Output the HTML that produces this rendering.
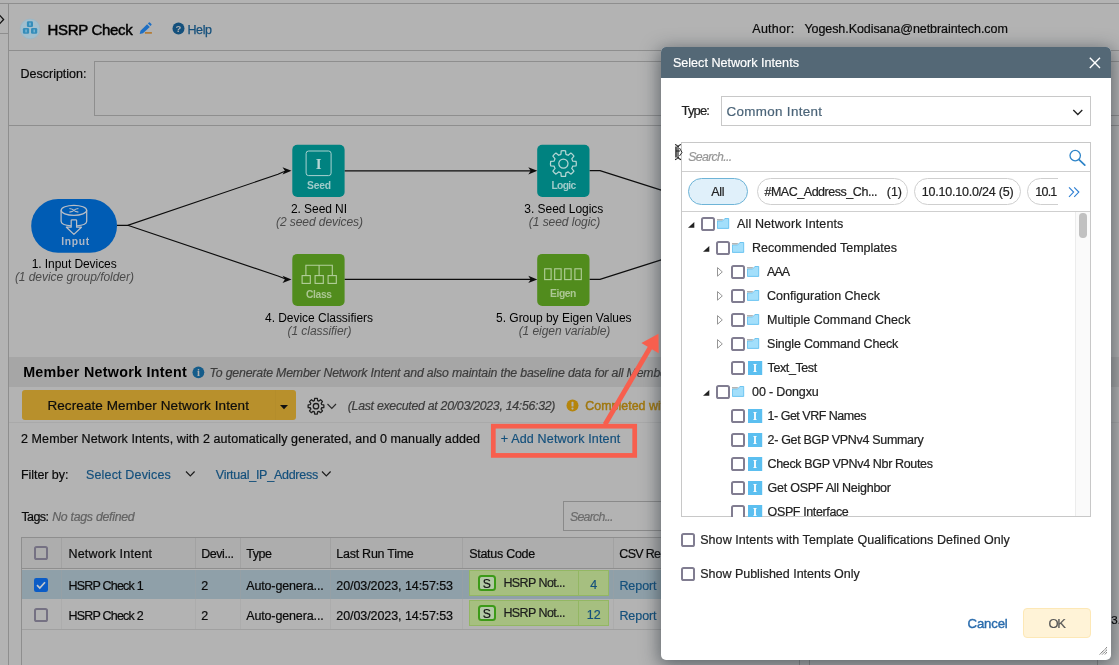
<!DOCTYPE html>
<html lang="en"><head><meta charset="utf-8"><title>HSRP Check - Select Network Intents</title>
<style>
html,body{margin:0;padding:0}
body{width:1119px;height:665px;overflow:hidden;background:#b3b3b3;font-family:"Liberation Sans",sans-serif}
#page{position:relative;width:1119px;height:665px;overflow:hidden;background:#b3b3b3;filter:opacity(0.9999)}
.r{position:absolute;display:block;box-sizing:content-box}
.t{position:absolute;white-space:nowrap;line-height:24px;display:block}
</style></head><body><div id="page">
<div class="r" style="left:0px;top:3px;width:1119px;height:1px;background:#8e8e8e;"></div>
<div class="r" style="left:8px;top:4px;width:1px;height:661px;background:#8e8e8e;"></div>
<div class="r" style="left:0px;top:33px;width:8px;height:1px;background:#8e8e8e;"></div>
<svg class="r" style="left:0;top:10px" width="8" height="20" viewBox="0 0 8 20"><path d="M-1 4.5 L3.6 9.5 L-1 14.5" fill="none" stroke="#111" stroke-width="1.3"/></svg>
<div class="r" style="left:9px;top:50px;width:1110px;height:1px;background:#8e8e8e;"></div>
<div class="r" style="left:94px;top:61px;width:1040px;height:53px;border:1px solid #8e8e8e;"></div>
<div class="r" style="left:9px;top:125px;width:1110px;height:1px;background:#8e8e8e;"></div>
<svg class="r" style="left:19px;top:18px" width="22" height="22" viewBox="0 0 22 22">
<circle cx="11.1" cy="10.9" r="9.9" fill="#a1bfce" stroke="#96b7c9" stroke-width="0.6"/>
<g fill="#348dba"><rect x="7.9" y="3.2" width="6.1" height="5.9" rx="1.3"/><rect x="3.9" y="10" width="6.2" height="5.8" rx="1.3"/><rect x="12" y="10" width="6.2" height="5.8" rx="1.3"/></g>
<g fill="#8fc3dd"><rect x="10.4" y="4.7" width="1.2" height="2.9"/><rect x="6.5" y="11.5" width="1.1" height="2.9"/><rect x="14.6" y="11.5" width="1.1" height="2.9"/></g>
</svg>
<span class="t" style="left:47.50px;top:18.00px;font-size:15px;color:#000;letter-spacing:-0.321px;-webkit-text-stroke:0.45px #000;">HSRP Check</span>
<svg class="r" style="left:138px;top:20px" width="16" height="16" viewBox="0 0 16 16">
<path d="M1.7 13.9 L2.5 10.8 L9.1 4.2 L11.8 6.9 L5 13.2 Z" fill="#1d6fc4"/><path d="M9.9 3.4 L10.9 2.5 Q11.4 2.1 11.9 2.6 L13.4 4.1 Q13.9 4.6 13.4 5.1 L12.5 6 Z" fill="#1d6fc4"/><path d="M6.9 12.9 H13.9" stroke="#b4772a" stroke-width="1.6"/></svg>
<svg class="r" style="left:171.5px;top:22.3px" width="13" height="13" viewBox="0 0 13 13"><circle cx="6.5" cy="6.5" r="6" fill="#14507c"/>
<text x="6.5" y="10" font-family="Liberation Sans, sans-serif" font-size="9.5" font-weight="bold" fill="#b3b3b3" text-anchor="middle">?</text></svg>
<span class="t" style="left:187.50px;top:18.00px;font-size:12.5px;color:#14507c;letter-spacing:-0.403px;-webkit-text-stroke:0.25px #14507c;">Help</span>
<span class="t" style="left:20.50px;top:62.00px;font-size:12.5px;color:#0a0a0a;-webkit-text-stroke:0.2px #0a0a0a;">Description:</span>
<span class="t" style="left:752.30px;top:17.00px;font-size:12.5px;color:#0a0a0a;letter-spacing:0.250px;-webkit-text-stroke:0.2px #0a0a0a;">Author:</span>
<span class="t" style="left:804.40px;top:17.00px;font-size:12.5px;color:#0a0a0a;letter-spacing:-0.065px;-webkit-text-stroke:0.2px #0a0a0a;">Yogesh.Kodisana@netbraintech.com</span>
<svg class="r" style="left:0;top:125px" width="670" height="230" viewBox="0 125 670 230">
<defs><path id="ah" d="M0 0 L-9 -3.6 L-6.6 0 L-9 3.6 Z" fill="#0c0c0c"/></defs>
<g fill="none" stroke="#0c0c0c" stroke-width="1.15">
<path d="M117 225.3 H127.7 L278 174.3 Q283 172 286 171"/>
<path d="M127.7 225.3 L278 276 Q283 278 286 279.3"/>
<path d="M344.5 170.8 H532"/><path d="M344.5 279.4 H532"/>
<path d="M589.5 170.6 H600 L662 190.4"/><path d="M589.5 279.4 H600 L662 259.6"/>
</g>
<use href="#ah" x="291.5" y="170.8"/><use href="#ah" x="291.5" y="279.4"/><use href="#ah" x="537.3" y="170.8"/><use href="#ah" x="537.3" y="279.4"/>
<rect x="31.2" y="199" width="85.8" height="53.8" rx="26.9" fill="#005cb4"/>
<g fill="none" stroke="#b9bec6" stroke-width="1.25" stroke-linejoin="round">
<ellipse cx="73.9" cy="210.3" rx="12.8" ry="5"/>
<path d="M61.1 210.3 V221.2 C61.1 223.6 65.6 225.4 71.2 225.8 M76.6 225.8 C82.2 225.4 86.7 223.6 86.7 221.2 V210.3"/>
<path d="M71.2 227.2 V220.6 Q71.2 219.8 72 219.8 H75.8 Q76.6 219.8 76.6 220.6 V227.2 H81.4 L73.9 234.4 L66.4 227.2 Z"/>
<path d="M69.4 208.5 Q72.5 208.9 73.9 210.3 Q75.3 211.7 78.4 212.1 M69.4 212.1 Q72.5 211.7 73.9 210.3 Q75.3 208.9 78.4 208.5" stroke-width="1.1"/>
</g>
<rect x="292.3" y="144.8" width="52.3" height="52.2" rx="5" fill="#008280"/>
<rect x="537.2" y="144.8" width="52.3" height="52.2" rx="5" fill="#008280"/>
<rect x="292.3" y="253.9" width="52.3" height="52.1" rx="5" fill="#518c1d"/>
<rect x="537.2" y="253.9" width="52.3" height="52.1" rx="5" fill="#518c1d"/>
<rect x="306.1" y="151" width="25" height="24.6" rx="2.5" fill="none" stroke="#a9d2d0" stroke-width="1"/>
<text x="318.6" y="168.6" font-family="Liberation Serif, serif" font-weight="bold" font-size="15" fill="#b4d6d4" text-anchor="middle">I</text>
<g fill="none" stroke="#b4cf9c" stroke-width="1.1">
<path d="M305.9 275.4 V265.2 H332.3 V275.4 M319.1 265.2 V275.4"/>
<rect x="302.1" y="275.6" width="8.2" height="7.8"/><rect x="315.1" y="275.6" width="8.2" height="7.8"/><rect x="328.1" y="275.6" width="8.2" height="7.8"/>
<rect x="544.7" y="268.8" width="6.4" height="10.8"/><rect x="554.7" y="268.8" width="6.4" height="10.8"/><rect x="564.7" y="268.8" width="6.4" height="10.8"/><rect x="574.9" y="268.8" width="6.4" height="10.8"/>
</g>
<g transform="translate(563.4 163.6)" fill="none" stroke="#b4d6d4" stroke-width="1.25" stroke-linejoin="round"><circle r="4.6"/>
<path id="gear" d="M-2.47 -9.28 L-2.18 -12.71 A12.9 12.9 0 0 1 2.18 -12.71 L2.47 -9.28 A9.6 9.6 0 0 1 4.81 -8.31 L7.45 -10.53 A12.9 12.9 0 0 1 10.53 -7.45 L8.31 -4.81 A9.6 9.6 0 0 1 9.28 -2.47 L12.71 -2.18 A12.9 12.9 0 0 1 12.71 2.18 L9.28 2.47 A9.6 9.6 0 0 1 8.31 4.81 L10.53 7.45 A12.9 12.9 0 0 1 7.45 10.53 L4.81 8.31 A9.6 9.6 0 0 1 2.47 9.28 L2.18 12.71 A12.9 12.9 0 0 1 -2.18 12.71 L-2.47 9.28 A9.6 9.6 0 0 1 -4.81 8.31 L-7.45 10.53 A12.9 12.9 0 0 1 -10.53 7.45 L-8.31 4.81 A9.6 9.6 0 0 1 -9.28 2.47 L-12.71 2.18 A12.9 12.9 0 0 1 -12.71 -2.18 L-9.28 -2.47 A9.6 9.6 0 0 1 -8.31 -4.81 L-10.53 -7.45 A12.9 12.9 0 0 1 -7.45 -10.53 L-4.81 -8.31 A9.6 9.6 0 0 1 -2.47 -9.28 Z"/></g>
</svg>
<span class="t" style="left:61.30px;top:230.00px;font-size:10.3px;color:#adb7c6;letter-spacing:0.708px;font-weight:bold;">Input</span>
<span class="t" style="left:307.00px;top:174.00px;font-size:10.3px;color:#9fcbc9;letter-spacing:-0.206px;font-weight:bold;">Seed</span>
<span class="t" style="left:551.40px;top:174.00px;font-size:10.3px;color:#9fcbc9;letter-spacing:-0.666px;font-weight:bold;">Logic</span>
<span class="t" style="left:306.00px;top:283.00px;font-size:10.3px;color:#abc793;letter-spacing:-0.371px;font-weight:bold;">Class</span>
<span class="t" style="left:550.00px;top:282.00px;font-size:10.3px;color:#abc793;letter-spacing:-0.411px;font-weight:bold;">Eigen</span>
<span class="t" style="left:31.70px;top:252.00px;font-size:12px;color:#000;letter-spacing:-0.070px;">1. Input Devices</span>
<span class="t" style="left:14.90px;top:265.00px;font-size:12px;color:#4a4a4a;letter-spacing:-0.049px;font-style:italic;">(1 device group/folder)</span>
<span class="t" style="left:291.00px;top:197.00px;font-size:12px;color:#000;letter-spacing:-0.078px;">2. Seed NI</span>
<span class="t" style="left:276.00px;top:210.00px;font-size:12px;color:#4a4a4a;letter-spacing:-0.070px;font-style:italic;">(2 seed devices)</span>
<span class="t" style="left:524.30px;top:197.00px;font-size:12px;color:#000;letter-spacing:-0.030px;">3. Seed Logics</span>
<span class="t" style="left:528.80px;top:210.00px;font-size:12px;color:#4a4a4a;letter-spacing:-0.049px;font-style:italic;">(1 seed logic)</span>
<span class="t" style="left:265.00px;top:306.00px;font-size:12px;color:#000;letter-spacing:-0.035px;">4. Device Classifiers</span>
<span class="t" style="left:287.50px;top:319.00px;font-size:12px;color:#4a4a4a;letter-spacing:-0.052px;font-style:italic;">(1 classifier)</span>
<span class="t" style="left:496.00px;top:306.00px;font-size:12px;color:#000;letter-spacing:-0.011px;">5. Group by Eigen Values</span>
<span class="t" style="left:518.65px;top:319.00px;font-size:12px;color:#4a4a4a;letter-spacing:-0.060px;font-style:italic;">(1 eigen variable)</span>
<div class="r" style="left:9px;top:357px;width:1110px;height:30px;background:#a6a6a6;"></div>
<span class="t" style="left:23.20px;top:360.00px;font-size:14.3px;color:#000;letter-spacing:0.274px;font-weight:bold;">Member Network Intent</span>
<svg class="r" style="left:191.5px;top:365.5px" width="13" height="13" viewBox="0 0 13 13"><circle cx="6.4" cy="6.3" r="5.9" fill="#145c8a"/>
<text x="6.5" y="10.4" font-family="Liberation Serif, serif" font-size="10.5" font-weight="bold" fill="#b0b0b0" text-anchor="middle">i</text></svg>
<span class="t" style="left:209.50px;top:361.00px;font-size:12.3px;color:#3c3c3c;letter-spacing:-0.168px;font-style:italic;-webkit-text-stroke:0.2px #3c3c3c;white-space:nowrap;">To generate Member Network Intent and also maintain the baseline data for all Member Network Intents</span>
<div class="r" style="left:21.8px;top:390.2px;width:274px;height:29.5px;background:#b8902c;border-radius:3px;"></div>
<div class="r" style="left:275px;top:390.2px;width:1px;height:29.5px;background:#b48d2b;"></div>
<span class="t" style="left:47.40px;top:394.00px;font-size:13.5px;color:#0c0c0c;letter-spacing:0.095px;-webkit-text-stroke:0.2px #0c0c0c;">Recreate Member Network Intent</span>
<svg class="r" style="left:279px;top:404px" width="10" height="6" viewBox="0 0 10 6"><path d="M1 1 H9 L5 5.2 Z" fill="#111"/></svg>
<svg class="r" style="left:305px;top:395px" width="34" height="22" viewBox="0 0 34 22"><g transform="translate(11 11.2)" fill="none" stroke="#1e1e1e" stroke-width="1.3" stroke-linejoin="round"><circle r="2.7"/><path d="M-1.57 -5.69 L-1.34 -7.79 A7.9 7.9 0 0 1 1.34 -7.79 L1.57 -5.69 A5.9 5.9 0 0 1 2.91 -5.13 L4.56 -6.45 A7.9 7.9 0 0 1 6.45 -4.56 L5.13 -2.91 A5.9 5.9 0 0 1 5.69 -1.57 L7.79 -1.34 A7.9 7.9 0 0 1 7.79 1.34 L5.69 1.57 A5.9 5.9 0 0 1 5.13 2.91 L6.45 4.56 A7.9 7.9 0 0 1 4.56 6.45 L2.91 5.13 A5.9 5.9 0 0 1 1.57 5.69 L1.34 7.79 A7.9 7.9 0 0 1 -1.34 7.79 L-1.57 5.69 A5.9 5.9 0 0 1 -2.91 5.13 L-4.56 6.45 A7.9 7.9 0 0 1 -6.45 4.56 L-5.13 2.91 A5.9 5.9 0 0 1 -5.69 1.57 L-7.79 1.34 A7.9 7.9 0 0 1 -7.79 -1.34 L-5.69 -1.57 A5.9 5.9 0 0 1 -5.13 -2.91 L-6.45 -4.56 A7.9 7.9 0 0 1 -4.56 -6.45 L-2.91 -5.13 A5.9 5.9 0 0 1 -1.57 -5.69 Z"/></g>
<path d="M22.5 9 L26.8 13.3 L31 9" fill="none" stroke="#2c2c2c" stroke-width="1.2"/></svg>
<span class="t" style="left:347.80px;top:394.00px;font-size:12.3px;color:#3c3c3c;letter-spacing:-0.275px;font-style:italic;-webkit-text-stroke:0.2px #3c3c3c;">(Last executed at 20/03/2023, 14:56:32)</span>
<svg class="r" style="left:566px;top:398.5px" width="13" height="13" viewBox="0 0 13 13"><circle cx="6.5" cy="6.5" r="6" fill="#b5850c"/>
<rect x="5.5" y="2.8" width="2" height="4.8" rx="0.6" fill="#b3b3b3"/><circle cx="6.5" cy="9.6" r="1.1" fill="#b3b3b3"/></svg>
<span class="t" style="left:585.30px;top:394.00px;font-size:12.4px;color:#a0770f;letter-spacing:0.030px;-webkit-text-stroke:0.45px #a0770f;">Completed with warnings</span>
<div class="r" style="left:9px;top:422px;width:1110px;height:1px;background:#a9a9a9;"></div>
<span class="t" style="left:21.00px;top:427.00px;font-size:12.5px;color:#0a0a0a;letter-spacing:0.086px;-webkit-text-stroke:0.2px #0a0a0a;">2 Member Network Intents, with 2 automatically generated, and 0 manually added</span>
<span class="t" style="left:500.80px;top:427.00px;font-size:12.5px;color:#14507c;letter-spacing:0.164px;-webkit-text-stroke:0.2px #14507c;">+ Add Network Intent</span>
<span class="t" style="left:21.00px;top:463.00px;font-size:12.5px;color:#0a0a0a;letter-spacing:-0.058px;-webkit-text-stroke:0.2px #0a0a0a;">Filter by:</span>
<span class="t" style="left:86.00px;top:463.00px;font-size:12.5px;color:#14507c;letter-spacing:0.164px;-webkit-text-stroke:0.2px #14507c;">Select Devices</span>
<svg class="r" style="left:185px;top:470px" width="11" height="8" viewBox="0 0 11 8"><path d="M1 1.5 L5.3 5.8 L9.6 1.5" fill="none" stroke="#1c1c1c" stroke-width="1.2"/></svg>
<span class="t" style="left:215.80px;top:463.00px;font-size:12.5px;color:#14507c;letter-spacing:-0.258px;-webkit-text-stroke:0.2px #14507c;">Virtual_IP_Address</span>
<svg class="r" style="left:321px;top:470px" width="11" height="8" viewBox="0 0 11 8"><path d="M1 1.5 L5.3 5.8 L9.6 1.5" fill="none" stroke="#1c1c1c" stroke-width="1.2"/></svg>
<span class="t" style="left:21.40px;top:505.00px;font-size:12.5px;color:#0a0a0a;letter-spacing:-0.569px;-webkit-text-stroke:0.2px #0a0a0a;">Tags:</span>
<span class="t" style="left:52.20px;top:505.00px;font-size:12.3px;color:#626262;letter-spacing:-0.262px;font-style:italic;-webkit-text-stroke:0.2px #626262;">No tags defined</span>
<div class="r" style="left:563px;top:501px;width:200px;height:28px;border:1px solid #8a8a8a;"></div>
<span class="t" style="left:570.00px;top:505.00px;font-size:12.3px;color:#6c6c6c;letter-spacing:-0.716px;font-style:italic;-webkit-text-stroke:0.2px #6c6c6c;">Search...</span>
<div class="r" style="left:21px;top:537px;width:1075px;height:140px;border:1px solid #8e8e8e;"></div>
<div class="r" style="left:22px;top:538px;width:1075px;height:30px;background:#adadad;"></div>
<div class="r" style="left:22px;top:568px;width:1075px;height:1px;background:#8e8e8e;"></div>
<div class="r" style="left:22px;top:570px;width:1075px;height:29px;background:#8fa0a9;"></div>
<div class="r" style="left:22px;top:629px;width:1075px;height:1px;background:#a0a0a0;"></div>
<div class="r" style="left:61.4px;top:538px;width:1px;height:30px;background:#a2a2a2;"></div>
<div class="r" style="left:61.4px;top:570px;width:1px;height:59px;background:rgba(160,160,160,0.35);"></div>
<div class="r" style="left:194.5px;top:538px;width:1px;height:30px;background:#a2a2a2;"></div>
<div class="r" style="left:194.5px;top:570px;width:1px;height:59px;background:rgba(160,160,160,0.35);"></div>
<div class="r" style="left:239.5px;top:538px;width:1px;height:30px;background:#a2a2a2;"></div>
<div class="r" style="left:239.5px;top:570px;width:1px;height:59px;background:rgba(160,160,160,0.35);"></div>
<div class="r" style="left:329.6px;top:538px;width:1px;height:30px;background:#a2a2a2;"></div>
<div class="r" style="left:329.6px;top:570px;width:1px;height:59px;background:rgba(160,160,160,0.35);"></div>
<div class="r" style="left:462.3px;top:538px;width:1px;height:30px;background:#a2a2a2;"></div>
<div class="r" style="left:462.3px;top:570px;width:1px;height:59px;background:rgba(160,160,160,0.35);"></div>
<div class="r" style="left:612.5px;top:538px;width:1px;height:30px;background:#a2a2a2;"></div>
<div class="r" style="left:612.5px;top:570px;width:1px;height:59px;background:rgba(160,160,160,0.35);"></div>
<div class="r" style="left:34.1px;top:546px;width:13.8px;height:13.6px;background:transparent;border:2px solid #757183;border-radius:2.6px;box-sizing:border-box;"></div>
<svg class="r" style="left:34.2px;top:578px" width="14" height="14" viewBox="0 0 14 14"><rect x="0" y="0" width="14" height="14" rx="2.2" fill="#0b5cc6"/><path d="M3 7.2 L5.8 10 L11 4.2" fill="none" stroke="#c4c8cc" stroke-width="1.7"/></svg>
<div class="r" style="left:34.1px;top:608px;width:13.8px;height:13.6px;background:transparent;border:2px solid #757183;border-radius:2.6px;box-sizing:border-box;"></div>
<span class="t" style="left:68.40px;top:542.00px;font-size:12.5px;color:#0a0a0a;letter-spacing:0.239px;-webkit-text-stroke:0.2px #0a0a0a;">Network Intent</span>
<span class="t" style="left:201.20px;top:542.00px;font-size:12.5px;color:#0a0a0a;letter-spacing:-0.437px;-webkit-text-stroke:0.2px #0a0a0a;">Devi...</span>
<span class="t" style="left:246.20px;top:542.00px;font-size:12.5px;color:#0a0a0a;letter-spacing:-0.434px;-webkit-text-stroke:0.2px #0a0a0a;">Type</span>
<span class="t" style="left:336.30px;top:542.00px;font-size:12.5px;color:#0a0a0a;letter-spacing:-0.258px;-webkit-text-stroke:0.2px #0a0a0a;">Last Run Time</span>
<span class="t" style="left:469.20px;top:542.00px;font-size:12.5px;color:#0a0a0a;letter-spacing:-0.279px;-webkit-text-stroke:0.2px #0a0a0a;">Status Code</span>
<span class="t" style="left:619.30px;top:542.00px;font-size:12.5px;color:#0a0a0a;letter-spacing:-0.688px;-webkit-text-stroke:0.2px #0a0a0a;">CSV Report</span>
<span class="t" style="left:68.40px;top:574.00px;font-size:12.5px;color:#0a0a0a;letter-spacing:-0.776px;-webkit-text-stroke:0.2px #0a0a0a;">HSRP Check 1</span>
<span class="t" style="left:201.20px;top:574.00px;font-size:12.5px;color:#0a0a0a;-webkit-text-stroke:0.2px #0a0a0a;">2</span>
<span class="t" style="left:246.20px;top:574.00px;font-size:12.5px;color:#0a0a0a;letter-spacing:-0.132px;-webkit-text-stroke:0.2px #0a0a0a;">Auto-genera...</span>
<span class="t" style="left:336.30px;top:574.00px;font-size:12.5px;color:#0a0a0a;letter-spacing:-0.077px;-webkit-text-stroke:0.2px #0a0a0a;">20/03/2023, 14:57:53</span>
<div class="r" style="left:468.9px;top:570.4px;width:140px;height:25.2px;background:#a6bf80;border:1px solid #93b763;box-sizing:border-box;"></div>
<div class="r" style="left:578px;top:570.4px;width:1px;height:25.2px;background:#93b763;"></div>
<div class="r" style="left:477.9px;top:575.1999999999999px;width:17.8px;height:15.6px;background:#b3c9a6;border:2px solid #3c9a18;border-radius:3.5px;box-sizing:border-box;"></div>
<span class="t" style="left:482.73px;top:572.00px;font-size:12.2px;color:#111;-webkit-text-stroke:0.2px #111;">S</span>
<span class="t" style="left:503.40px;top:571.00px;font-size:12.5px;color:#1c1c1c;letter-spacing:-0.575px;-webkit-text-stroke:0.2px #1c1c1c;">HSRP Not...</span>
<span class="t" style="left:590.32px;top:573.00px;font-size:12.5px;color:#14507c;-webkit-text-stroke:0.2px #14507c;">4</span>
<span class="t" style="left:619.40px;top:574.00px;font-size:12.5px;color:#14507c;letter-spacing:-0.064px;-webkit-text-stroke:0.2px #14507c;">Report</span>
<span class="t" style="left:68.40px;top:604.00px;font-size:12.5px;color:#0a0a0a;letter-spacing:-0.776px;-webkit-text-stroke:0.2px #0a0a0a;">HSRP Check 2</span>
<span class="t" style="left:201.20px;top:604.00px;font-size:12.5px;color:#0a0a0a;-webkit-text-stroke:0.2px #0a0a0a;">2</span>
<span class="t" style="left:246.20px;top:604.00px;font-size:12.5px;color:#0a0a0a;letter-spacing:-0.132px;-webkit-text-stroke:0.2px #0a0a0a;">Auto-genera...</span>
<span class="t" style="left:336.30px;top:604.00px;font-size:12.5px;color:#0a0a0a;letter-spacing:-0.077px;-webkit-text-stroke:0.2px #0a0a0a;">20/03/2023, 14:57:53</span>
<div class="r" style="left:468.9px;top:600.4px;width:140px;height:25.2px;background:#a6bf80;border:1px solid #93b763;box-sizing:border-box;"></div>
<div class="r" style="left:578px;top:600.4px;width:1px;height:25.2px;background:#93b763;"></div>
<div class="r" style="left:477.9px;top:605.1999999999999px;width:17.8px;height:15.6px;background:#b3c9a6;border:2px solid #3c9a18;border-radius:3.5px;box-sizing:border-box;"></div>
<span class="t" style="left:482.73px;top:602.00px;font-size:12.2px;color:#111;-webkit-text-stroke:0.2px #111;">S</span>
<span class="t" style="left:503.40px;top:601.00px;font-size:12.5px;color:#1c1c1c;letter-spacing:-0.575px;-webkit-text-stroke:0.2px #1c1c1c;">HSRP Not...</span>
<span class="t" style="left:586.85px;top:603.00px;font-size:12.5px;color:#14507c;-webkit-text-stroke:0.2px #14507c;">12</span>
<span class="t" style="left:619.40px;top:604.00px;font-size:12.5px;color:#14507c;letter-spacing:-0.064px;-webkit-text-stroke:0.2px #14507c;">Report</span>
<span class="t" style="left:1111.30px;top:608.00px;font-size:11.5px;color:#000;-webkit-text-stroke:0.2px #000;">3.</span>
<div class="r" style="left:798.5px;top:655px;width:1px;height:10px;background:#8e8e8e;"></div>
<div class="r" style="left:808.5px;top:655px;width:1px;height:10px;background:#8e8e8e;"></div>
<div class="r" style="left:661px;top:47px;width:450px;height:612.5px;background:#fff;border-radius:5px 5px 5px 5px;box-shadow:0 4px 18px 2px rgba(30,40,50,0.55);"></div>
<div class="r" style="left:661px;top:47px;width:450px;height:31px;background:#546876;border-radius:5px 5px 0 0;"></div>
<span class="t" style="left:672.90px;top:51.00px;font-size:12.6px;color:#fff;letter-spacing:0.002px;-webkit-text-stroke:0.2px #fff;">Select Network Intents</span>
<svg class="r" style="left:1089px;top:57px" width="12" height="12" viewBox="0 0 12 12"><path d="M0.8 0.8 L11 11 M11 0.8 L0.8 11" stroke="#fff" stroke-width="1.4" fill="none"/></svg>
<span class="t" style="left:681.60px;top:99.00px;font-size:13px;color:#222;letter-spacing:-0.874px;-webkit-text-stroke:0.2px #222;">Type:</span>
<div class="r" style="left:720.7px;top:96.2px;width:370px;height:29.4px;border:1px solid #c8c8c8;box-sizing:border-box;"></div>
<span class="t" style="left:726.60px;top:100.00px;font-size:13.4px;color:#4b6478;letter-spacing:0.316px;-webkit-text-stroke:0.2px #4b6478;">Common Intent</span>
<svg class="r" style="left:1072px;top:108px" width="12" height="9" viewBox="0 0 12 9"><path d="M1.3 2 L5.8 6.5 L10.3 2" fill="none" stroke="#222" stroke-width="1.3"/></svg>
<div class="r" style="left:681.3px;top:142px;width:409.6px;height:375.4px;border:1px solid #c8c8c8;box-sizing:border-box;"></div>
<div class="r" style="left:682px;top:171.2px;width:408px;height:1px;background:#cfcfcf;"></div>
<div class="r" style="left:682px;top:211.2px;width:408px;height:1px;background:#cfcfcf;"></div>
<span class="t" style="left:688.20px;top:145.00px;font-size:12.3px;color:#969696;letter-spacing:-0.641px;font-style:italic;-webkit-text-stroke:0.2px #969696;">Search...</span>
<svg class="r" style="left:1068px;top:148px" width="19" height="19" viewBox="0 0 19 19"><circle cx="7.2" cy="7.6" r="5.2" fill="none" stroke="#2e84c8" stroke-width="1.3"/><path d="M11 11.6 L16.8 17.2" stroke="#2e84c8" stroke-width="1.7" stroke-linecap="round"/></svg>
<svg class="r" style="left:673px;top:143px" width="11" height="18" viewBox="0 0 11 18"><g fill="none" stroke="#1a1a1a" stroke-width="1.1"><path d="M2 1.5 Q4.5 1.8 5 4 Q5.6 1.8 8 1.5 M5 4 V14 M2 16.6 Q4.5 16.2 5 14 Q5.6 16.2 8 16.6 M3 8 H7"/><path d="M6.5 5 L9 9.5 L6.5 13" stroke-width="0.9"/><path d="M3 3.5 V14.5" stroke-width="1.4"/></g></svg>
<div class="r" style="left:687.7px;top:178px;width:60.4px;height:27px;background:#e0f0fa;border:1px solid #6eb4d7;border-radius:13.5px;box-sizing:border-box;"></div>
<span class="t" style="left:711.25px;top:180.00px;font-size:12.5px;color:#222;letter-spacing:-0.296px;-webkit-text-stroke:0.2px #222;">All</span>
<div class="r" style="left:757px;top:178px;width:151.4px;height:27px;background:#fff;border:1px solid #cfcfcf;border-radius:13.5px;box-sizing:border-box;"></div>
<span class="t" style="left:764.40px;top:180.00px;font-size:12.5px;color:#222;letter-spacing:-0.464px;-webkit-text-stroke:0.2px #222;">#MAC_Address_Ch...</span>
<span class="t" style="left:886.80px;top:180.00px;font-size:12.5px;color:#222;letter-spacing:-0.039px;-webkit-text-stroke:0.2px #222;">(1)</span>
<div class="r" style="left:914.3px;top:178px;width:107px;height:27px;background:#fff;border:1px solid #cfcfcf;border-radius:13.5px;box-sizing:border-box;"></div>
<span class="t" style="left:921.70px;top:180.00px;font-size:12.5px;color:#222;letter-spacing:-0.207px;-webkit-text-stroke:0.2px #222;">10.10.10.0/24 (5)</span>
<div class="r" style="left:1026.7px;top:178px;width:31.2px;height:27px;overflow:hidden"><div class="r" style="left:0;top:0;width:110px;height:27px;background:#fff;border:1px solid #cfcfcf;border-radius:13.5px;box-sizing:border-box"></div></div>
<span class="t" style="left:1035.30px;top:180.00px;font-size:12.5px;color:#222;letter-spacing:-0.776px;-webkit-text-stroke:0.2px #222;">10.1</span>
<svg class="r" style="left:1067px;top:185px" width="14" height="14" viewBox="0 0 14 14"><path d="M2 2.4 L6.6 7.1 L2 11.8 M7.2 2.4 L11.8 7.1 L7.2 11.8" fill="none" stroke="#2e7fd2" stroke-width="1.15"/></svg>
<div class="r" style="left:1075px;top:212.2px;width:14.9px;height:304.2px;background:#fafafa;border-left:1px solid #ececec;box-sizing:border-box;"></div>
<div class="r" style="left:1079.2px;top:213.4px;width:7.4px;height:24.2px;background:#c1c1c1;border-radius:3.7px;"></div>
<div class="r" style="left:682px;top:212px;width:393px;height:304.6px;overflow:hidden">
<svg class="r" style="left:6px;top:10.100000000000012px" width="7" height="7" viewBox="0 0 7 7"><path d="M6.3 0 V5.7 H0 Z" fill="#222"/></svg>
<div class="r" style="left:19.200000000000045px;top:5.0000000000000115px;width:13.7px;height:13.6px;background:#fff;border:2px solid #817d91;border-radius:2.6px;box-sizing:border-box;"></div>
<svg class="r" style="left:35px;top:5.900000000000011px" width="13" height="12" viewBox="0 0 13 12"><path d="M0.4 2.9 H5.7 L7.9 0.5 H11.7 V10.4 H0.4 Z" fill="#a3dffb" stroke="#56baee" stroke-width="0.8"/><path d="M0 1.1 H6.2 L5.2 2.5 H0 Z" fill="#b4b4b4"/></svg>
<span class="t" style="left:55.10px;top:0.00px;font-size:12.5px;color:#222;letter-spacing:0.111px;-webkit-text-stroke:0.2px #222;">All Network Intents</span>
<svg class="r" style="left:21px;top:34.10000000000001px" width="7" height="7" viewBox="0 0 7 7"><path d="M6.3 0 V5.7 H0 Z" fill="#222"/></svg>
<div class="r" style="left:34.200000000000045px;top:29.00000000000001px;width:13.7px;height:13.6px;background:#fff;border:2px solid #817d91;border-radius:2.6px;box-sizing:border-box;"></div>
<svg class="r" style="left:50px;top:29.900000000000013px" width="13" height="12" viewBox="0 0 13 12"><path d="M0.4 2.9 H5.7 L7.9 0.5 H11.7 V10.4 H0.4 Z" fill="#a3dffb" stroke="#56baee" stroke-width="0.8"/><path d="M0 1.1 H6.2 L5.2 2.5 H0 Z" fill="#b4b4b4"/></svg>
<span class="t" style="left:70.10px;top:24.00px;font-size:12.5px;color:#222;letter-spacing:-0.009px;-webkit-text-stroke:0.2px #222;">Recommended Templates</span>
<svg class="r" style="left:35.39999999999998px;top:55.20000000000001px" width="7" height="10" viewBox="0 0 7 10"><path d="M0.5 0.6 L5.3 4.9 L0.5 9.2 Z" fill="#fff" stroke="#8a8a8a" stroke-width="0.9"/></svg>
<div class="r" style="left:49.200000000000045px;top:53.000000000000014px;width:13.7px;height:13.6px;background:#fff;border:2px solid #817d91;border-radius:2.6px;box-sizing:border-box;"></div>
<svg class="r" style="left:65px;top:53.90000000000001px" width="13" height="12" viewBox="0 0 13 12"><path d="M0.4 2.9 H5.7 L7.9 0.5 H11.7 V10.4 H0.4 Z" fill="#a3dffb" stroke="#56baee" stroke-width="0.8"/><path d="M0 1.1 H6.2 L5.2 2.5 H0 Z" fill="#b4b4b4"/></svg>
<span class="t" style="left:85.10px;top:48.00px;font-size:12.5px;color:#222;letter-spacing:-1.007px;-webkit-text-stroke:0.2px #222;">AAA</span>
<svg class="r" style="left:35.39999999999998px;top:79.20000000000002px" width="7" height="10" viewBox="0 0 7 10"><path d="M0.5 0.6 L5.3 4.9 L0.5 9.2 Z" fill="#fff" stroke="#8a8a8a" stroke-width="0.9"/></svg>
<div class="r" style="left:49.200000000000045px;top:77.00000000000001px;width:13.7px;height:13.6px;background:#fff;border:2px solid #817d91;border-radius:2.6px;box-sizing:border-box;"></div>
<svg class="r" style="left:65px;top:77.9px" width="13" height="12" viewBox="0 0 13 12"><path d="M0.4 2.9 H5.7 L7.9 0.5 H11.7 V10.4 H0.4 Z" fill="#a3dffb" stroke="#56baee" stroke-width="0.8"/><path d="M0 1.1 H6.2 L5.2 2.5 H0 Z" fill="#b4b4b4"/></svg>
<span class="t" style="left:85.10px;top:72.00px;font-size:12.5px;color:#222;letter-spacing:-0.026px;-webkit-text-stroke:0.2px #222;">Configuration Check</span>
<svg class="r" style="left:35.39999999999998px;top:103.20000000000002px" width="7" height="10" viewBox="0 0 7 10"><path d="M0.5 0.6 L5.3 4.9 L0.5 9.2 Z" fill="#fff" stroke="#8a8a8a" stroke-width="0.9"/></svg>
<div class="r" style="left:49.200000000000045px;top:101.00000000000001px;width:13.7px;height:13.6px;background:#fff;border:2px solid #817d91;border-radius:2.6px;box-sizing:border-box;"></div>
<svg class="r" style="left:65px;top:101.9px" width="13" height="12" viewBox="0 0 13 12"><path d="M0.4 2.9 H5.7 L7.9 0.5 H11.7 V10.4 H0.4 Z" fill="#a3dffb" stroke="#56baee" stroke-width="0.8"/><path d="M0 1.1 H6.2 L5.2 2.5 H0 Z" fill="#b4b4b4"/></svg>
<span class="t" style="left:85.10px;top:96.00px;font-size:12.5px;color:#222;letter-spacing:0.018px;-webkit-text-stroke:0.2px #222;">Multiple Command Check</span>
<svg class="r" style="left:35.39999999999998px;top:127.20000000000002px" width="7" height="10" viewBox="0 0 7 10"><path d="M0.5 0.6 L5.3 4.9 L0.5 9.2 Z" fill="#fff" stroke="#8a8a8a" stroke-width="0.9"/></svg>
<div class="r" style="left:49.200000000000045px;top:125.00000000000001px;width:13.7px;height:13.6px;background:#fff;border:2px solid #817d91;border-radius:2.6px;box-sizing:border-box;"></div>
<svg class="r" style="left:65px;top:125.9px" width="13" height="12" viewBox="0 0 13 12"><path d="M0.4 2.9 H5.7 L7.9 0.5 H11.7 V10.4 H0.4 Z" fill="#a3dffb" stroke="#56baee" stroke-width="0.8"/><path d="M0 1.1 H6.2 L5.2 2.5 H0 Z" fill="#b4b4b4"/></svg>
<span class="t" style="left:85.10px;top:120.00px;font-size:12.5px;color:#222;letter-spacing:-0.189px;-webkit-text-stroke:0.2px #222;">Single Command Check</span>
<div class="r" style="left:49.200000000000045px;top:149.0px;width:13.7px;height:13.6px;background:#fff;border:2px solid #817d91;border-radius:2.6px;box-sizing:border-box;"></div>
<svg class="r" style="left:65.70000000000005px;top:148.9px" width="15" height="15" viewBox="0 0 15 15"><rect x="0" y="0" width="14.2" height="14" fill="#5bbff0"/><text x="7.1" y="11.3" font-family="Liberation Serif, serif" font-weight="bold" font-size="11.5" fill="#fff" text-anchor="middle">I</text></svg>
<span class="t" style="left:85.60px;top:144.00px;font-size:12.5px;color:#222;letter-spacing:-0.400px;-webkit-text-stroke:0.2px #222;">Text_Test</span>
<svg class="r" style="left:21px;top:178.10000000000002px" width="7" height="7" viewBox="0 0 7 7"><path d="M6.3 0 V5.7 H0 Z" fill="#222"/></svg>
<div class="r" style="left:34.200000000000045px;top:173.0px;width:13.7px;height:13.6px;background:#fff;border:2px solid #817d91;border-radius:2.6px;box-sizing:border-box;"></div>
<svg class="r" style="left:50px;top:173.9px" width="13" height="12" viewBox="0 0 13 12"><path d="M0.4 2.9 H5.7 L7.9 0.5 H11.7 V10.4 H0.4 Z" fill="#a3dffb" stroke="#56baee" stroke-width="0.8"/><path d="M0 1.1 H6.2 L5.2 2.5 H0 Z" fill="#b4b4b4"/></svg>
<span class="t" style="left:70.10px;top:168.00px;font-size:12.5px;color:#222;letter-spacing:-0.150px;-webkit-text-stroke:0.2px #222;">00 - Dongxu</span>
<div class="r" style="left:49.200000000000045px;top:197.0px;width:13.7px;height:13.6px;background:#fff;border:2px solid #817d91;border-radius:2.6px;box-sizing:border-box;"></div>
<svg class="r" style="left:65.70000000000005px;top:196.9px" width="15" height="15" viewBox="0 0 15 15"><rect x="0" y="0" width="14.2" height="14" fill="#5bbff0"/><text x="7.1" y="11.3" font-family="Liberation Serif, serif" font-weight="bold" font-size="11.5" fill="#fff" text-anchor="middle">I</text></svg>
<span class="t" style="left:85.60px;top:192.00px;font-size:12.5px;color:#222;letter-spacing:-0.498px;-webkit-text-stroke:0.2px #222;">1- Get VRF Names</span>
<div class="r" style="left:49.200000000000045px;top:221.0px;width:13.7px;height:13.6px;background:#fff;border:2px solid #817d91;border-radius:2.6px;box-sizing:border-box;"></div>
<svg class="r" style="left:65.70000000000005px;top:220.9px" width="15" height="15" viewBox="0 0 15 15"><rect x="0" y="0" width="14.2" height="14" fill="#5bbff0"/><text x="7.1" y="11.3" font-family="Liberation Serif, serif" font-weight="bold" font-size="11.5" fill="#fff" text-anchor="middle">I</text></svg>
<span class="t" style="left:85.60px;top:216.00px;font-size:12.5px;color:#222;letter-spacing:-0.327px;-webkit-text-stroke:0.2px #222;">2- Get BGP VPNv4 Summary</span>
<div class="r" style="left:49.200000000000045px;top:245.0px;width:13.7px;height:13.6px;background:#fff;border:2px solid #817d91;border-radius:2.6px;box-sizing:border-box;"></div>
<svg class="r" style="left:65.70000000000005px;top:244.9px" width="15" height="15" viewBox="0 0 15 15"><rect x="0" y="0" width="14.2" height="14" fill="#5bbff0"/><text x="7.1" y="11.3" font-family="Liberation Serif, serif" font-weight="bold" font-size="11.5" fill="#fff" text-anchor="middle">I</text></svg>
<span class="t" style="left:85.60px;top:240.00px;font-size:12.5px;color:#222;letter-spacing:-0.354px;-webkit-text-stroke:0.2px #222;">Check BGP VPNv4 Nbr Routes</span>
<div class="r" style="left:49.200000000000045px;top:269.0px;width:13.7px;height:13.6px;background:#fff;border:2px solid #817d91;border-radius:2.6px;box-sizing:border-box;"></div>
<svg class="r" style="left:65.70000000000005px;top:268.90000000000003px" width="15" height="15" viewBox="0 0 15 15"><rect x="0" y="0" width="14.2" height="14" fill="#5bbff0"/><text x="7.1" y="11.3" font-family="Liberation Serif, serif" font-weight="bold" font-size="11.5" fill="#fff" text-anchor="middle">I</text></svg>
<span class="t" style="left:85.60px;top:264.00px;font-size:12.5px;color:#222;letter-spacing:-0.257px;-webkit-text-stroke:0.2px #222;">Get OSPF All Neighbor</span>
<div class="r" style="left:49.200000000000045px;top:293.0px;width:13.7px;height:13.6px;background:#fff;border:2px solid #817d91;border-radius:2.6px;box-sizing:border-box;"></div>
<svg class="r" style="left:65.70000000000005px;top:292.90000000000003px" width="15" height="15" viewBox="0 0 15 15"><rect x="0" y="0" width="14.2" height="14" fill="#5bbff0"/><text x="7.1" y="11.3" font-family="Liberation Serif, serif" font-weight="bold" font-size="11.5" fill="#fff" text-anchor="middle">I</text></svg>
<span class="t" style="left:85.60px;top:288.00px;font-size:12.5px;color:#222;letter-spacing:-0.380px;-webkit-text-stroke:0.2px #222;">OSPF Interface</span>
</div>
<div class="r" style="left:681.3px;top:533.3px;width:13.7px;height:13.6px;background:#fff;border:2px solid #817d91;border-radius:2.6px;box-sizing:border-box;"></div>
<span class="t" style="left:700.20px;top:528.00px;font-size:12.5px;color:#222;letter-spacing:0.066px;-webkit-text-stroke:0.2px #222;">Show Intents with Template Qualifications Defined Only</span>
<div class="r" style="left:681.3px;top:567.4px;width:13.7px;height:13.6px;background:#fff;border:2px solid #817d91;border-radius:2.6px;box-sizing:border-box;"></div>
<span class="t" style="left:700.20px;top:562.00px;font-size:12.5px;color:#222;letter-spacing:-0.008px;-webkit-text-stroke:0.2px #222;">Show Published Intents Only</span>
<span class="t" style="left:967.60px;top:612.00px;font-size:13.2px;color:#2a6cad;letter-spacing:-0.178px;-webkit-text-stroke:0.4px #2a6cad;">Cancel</span>
<div class="r" style="left:1023px;top:608.2px;width:67.8px;height:29.6px;background:#fff3d7;border:1px solid #fde8b6;border-radius:4px;box-sizing:border-box;"></div>
<span class="t" style="left:1048.55px;top:612.00px;font-size:13px;color:#565656;letter-spacing:-1.483px;-webkit-text-stroke:0.2px #565656;">OK</span>
<svg class="r" style="left:1098.5px;top:647.2px" width="8" height="8" viewBox="0 0 8 8"><path d="M7.8 0.4 L0.4 7.8 M7.8 2.9 L2.9 7.8 M7.8 5.4 L5.4 7.8" stroke="#4a4a4a" stroke-width="1" stroke-dasharray="1.2 0.5" fill="none"/></svg>
<svg class="r" style="left:480px;top:320px" width="190" height="145" viewBox="480 320 190 145">
<rect x="493.3" y="426.2" width="141.4" height="29.2" fill="none" stroke="#f75f4e" stroke-width="4.7"/>
<path d="M605 424.5 L650.2 347.4" stroke="#f75f4e" stroke-width="4.9" fill="none"/>
<path d="M658.5 333.8 L641.4 342.9 L658.7 353.2 Z" fill="#f75f4e"/></svg>
</div></body></html>
